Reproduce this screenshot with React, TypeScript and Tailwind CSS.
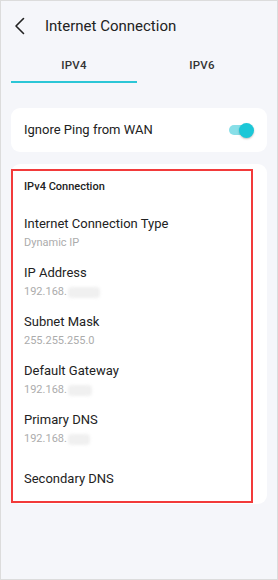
const font = { fontFamily: "Roboto, 'Noto Sans', sans-serif" };

function Blur({ w }: { w: string }) {
  return <span className={`inline-block ${w} h-[11px] bg-[#f0f0f0] blur-[1.5px] rounded-sm align-middle ml-[1px]`} />;
}

function Item({
  label,
  value,
  blur,
  className = "",
}: {
  label: string;
  value?: string;
  blur?: string;
  className?: string;
}) {
  return (
    <div className={className}>
      <div className="text-[13px] leading-[16px] text-[#222]">{label}</div>
      {value !== undefined && (
        <div className="mt-[4px] text-[11px] leading-[14px] text-[#acacac] flex items-center">
          <span>{value}</span>
          {blur && <Blur w={blur} />}
        </div>
      )}
    </div>
  );
}

export default function App() {
  return (
    <div style={font} className="w-[278px] h-[580px] bg-[#f5f6fa] border border-[#dcdcdc] overflow-hidden">
      {/* header */}
      <div className="h-[49px] flex items-center pl-[13px]">
        <svg width="12" height="18" viewBox="0 0 12 18" fill="none">
          <path d="M9.5 1.5 2 9l7.5 7.5" stroke="#222" strokeWidth="1.6" strokeLinecap="round" strokeLinejoin="round" />
        </svg>
        <span className="ml-[19px] text-[15px] text-[#222] leading-[20px]">Internet Connection</span>
      </div>

      {/* tabs */}
      <div className="flex px-[10px]">
        <div className="w-[126px] flex flex-col items-center pt-[8px]">
          <span className="text-[11.5px] leading-[14px] font-medium text-[#333] tracking-wide">IPV4</span>
          <div className="mt-[9px] h-[2px] w-full bg-[#2cc6d6]" />
        </div>
        <div className="flex-1 flex flex-col items-center pt-[8px]">
          <span className="text-[11.5px] leading-[14px] font-medium text-[#333] tracking-wide">IPV6</span>
        </div>
      </div>

      {/* ping card */}
      <div className="mx-[10px] mt-[25px] h-[44px] bg-white rounded-[9px] flex items-center justify-between pl-[13px] pr-[13px]">
        <span className="text-[13px] text-[#222]">Ignore Ping from WAN</span>
        <div className="relative w-[25px] h-[15px] flex items-center">
          <div className="w-[20px] h-[10px] rounded-full bg-[#88dfe8]" />
          <div className="absolute right-0 top-0 w-[15px] h-[15px] rounded-full bg-[#1bc7d7] shadow-[0_1px_2px_rgba(0,0,0,0.25)]" />
        </div>
      </div>

      {/* ipv4 card */}
      <div className="mx-[10px] mt-[12px] bg-white rounded-[9px] pt-[5px] pr-[14px] pb-[1px]">
        <div className="border-2 border-[#f23a3a] pl-[11px] pt-[9px] pb-[14px]">
          <div className="text-[11px] leading-[14px] font-medium text-[#222]">IPv4 Connection</div>
          <Item className="mt-[22px]" label="Internet Connection Type" value="Dynamic IP" />
          <Item className="mt-[15px]" label="IP Address" value="192.168." blur="w-[32px]" />
          <Item className="mt-[15px]" label="Subnet Mask" value="255.255.255.0" />
          <Item className="mt-[15px]" label="Default Gateway" value="192.168." blur="w-[24px]" />
          <Item className="mt-[15px]" label="Primary DNS" value="192.168." blur="w-[22px]" />
          <Item className="mt-[25px]" label="Secondary DNS" />
        </div>
      </div>
    </div>
  );
}
